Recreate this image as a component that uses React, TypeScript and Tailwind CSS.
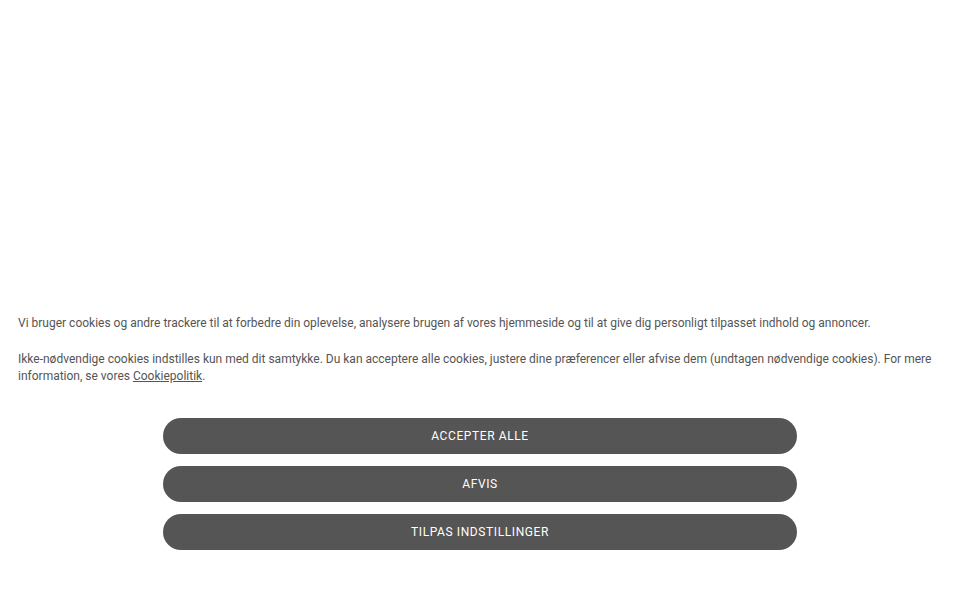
export default function App() {
  return (
    <div className="min-h-[600px] bg-white flex flex-col justify-end font-['Roboto',sans-serif]">
      {/* Cookie banner */}
      <div className="pb-[50px]">
        <div className="px-[18px]">
          <p className="text-[12px] leading-[17px] text-[#555555]">
            Vi bruger cookies og andre trackere til at forbedre din oplevelse, analysere brugen af vores hjemmeside og til at give dig personligt tilpasset indhold og annoncer.
          </p>
          <p className="mt-[19px] text-[12px] leading-[17px] text-[#555555]">
            Ikke-nødvendige cookies indstilles kun med dit samtykke. Du kan acceptere alle cookies, justere dine præferencer eller afvise dem (undtagen nødvendige cookies). For mere information, se vores{" "}
            <a href="#" className="underline text-[#555555]">Cookiepolitik</a>.
          </p>
        </div>

        <div className="mt-[33px] flex flex-col items-center gap-3">
          {["ACCEPTER ALLE", "AFVIS", "TILPAS INDSTILLINGER"].map((label) => (
            <button
              key={label}
              className="w-[66%] h-9 rounded-full bg-[#555555] text-white text-[12px] tracking-[0.05em]"
            >
              {label}
            </button>
          ))}
        </div>
      </div>
    </div>
  );
}
